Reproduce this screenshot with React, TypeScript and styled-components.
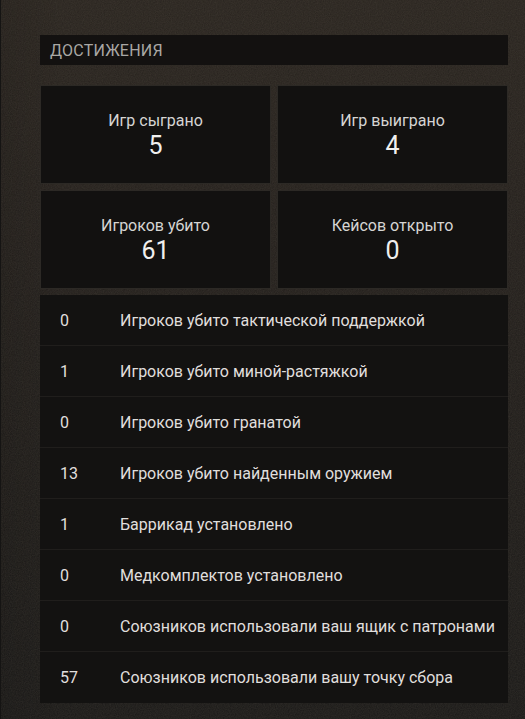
import React from 'react'
import styled, { createGlobalStyle } from 'styled-components'

// fine grain laid over the page gradient
const grain = `url("data:image/svg+xml;utf8,<svg xmlns='http://www.w3.org/2000/svg' width='160' height='160'><filter id='n'><feTurbulence type='fractalNoise' baseFrequency='0.85' numOctaves='2' stitchTiles='stitch'/><feColorMatrix values='0 0 0 0 0.2 0 0 0 0 0.17 0 0 0 0 0.13 0 0 0 0.22 0'/></filter><rect width='100%' height='100%' filter='url(%23n)'/></svg>")`

const GlobalStyle = createGlobalStyle`
  html, body {
    margin: 0;
    padding: 0;
    background: #1a1918;
  }
  body {
    font-family: Roboto, "Liberation Sans", sans-serif;
  }
`

const totals = [
  { label: 'Игр сыграно', value: 5 },
  { label: 'Игр выиграно', value: 4 },
  { label: 'Игроков убито', value: 61 },
  { label: 'Кейсов открыто', value: 0 },
]

const details = [
  { value: 0, label: 'Игроков убито тактической поддержкой' },
  { value: 1, label: 'Игроков убито миной-растяжкой' },
  { value: 0, label: 'Игроков убито гранатой' },
  { value: 13, label: 'Игроков убито найденным оружием' },
  { value: 1, label: 'Баррикад установлено' },
  { value: 0, label: 'Медкомплектов установлено' },
  { value: 0, label: 'Союзников использовали ваш ящик с патронами' },
  { value: 57, label: 'Союзников использовали вашу точку сбора' },
]

export default function App() {
  return (
    <>
      <GlobalStyle />
      <Page>
        <SectionTitle>ДОСТИЖЕНИЯ</SectionTitle>
        <TotalsGrid>
          {totals.map((t) => (
            <TotalCard key={t.label}>
              <TotalLabel>{t.label}</TotalLabel>
              <TotalValue>{t.value}</TotalValue>
            </TotalCard>
          ))}
        </TotalsGrid>
        <DetailList>
          {details.map((d) => (
            <DetailRow key={d.label}>
              <DetailValue>{d.value}</DetailValue>
              <DetailLabel>{d.label}</DetailLabel>
            </DetailRow>
          ))}
        </DetailList>
      </Page>
    </>
  )
}

const Page = styled.div`
  min-height: 719px;
  box-sizing: border-box;
  padding: 35px 17px 18px 40px;
  border-left: 1px solid #151413;
  background-color: #1f1c19;
  background-image: ${grain},
    linear-gradient(90deg, rgba(0, 0, 0, 0.12) 0%, rgba(0, 0, 0, 0) 12%),
    linear-gradient(180deg, #28231e 0%, #221e1b 35%, #1c1a18 75%, #191817 100%);
`

const SectionTitle = styled.div`
  height: 30px;
  margin-left: -1px;
  padding-left: 10px;
  display: flex;
  align-items: center;
  background: #131110;
  color: #a9a7a4;
  font-size: 16px;
  letter-spacing: 0.2px;
  margin-bottom: 20px;
`

const TotalsGrid = styled.div`
  display: grid;
  grid-template-columns: 1fr 1fr;
  gap: 6px;
  margin-left: -1px;
`

const TotalCard = styled.div`
  height: 99px;
  box-sizing: border-box;
  padding-top: 3px;
  border: 1px solid #2c2925;
  background: #121110;
  display: flex;
  flex-direction: column;
  align-items: center;
  justify-content: center;
`

const TotalLabel = styled.div`
  color: #d6d5d3;
  font-size: 16px;
  line-height: 20px;
`

const TotalValue = styled.div`
  color: #f0efee;
  font-size: 25px;
  line-height: 30px;
`

const DetailList = styled.div`
  margin-top: 6px;
  margin-left: -1px;
  background: #131211;
`

const DetailRow = styled.div`
  display: flex;
  align-items: center;
  height: 51px;
  box-sizing: border-box;
  border-bottom: 1px solid #201e1c;

  &:last-child {
    border-bottom: none;
  }
`

const DetailValue = styled.div`
  width: 80px;
  padding-left: 20px;
  box-sizing: border-box;
  color: #e0dfdd;
  font-size: 16px;
`

const DetailLabel = styled.div`
  color: #e0dfdd;
  font-size: 16px;
`
